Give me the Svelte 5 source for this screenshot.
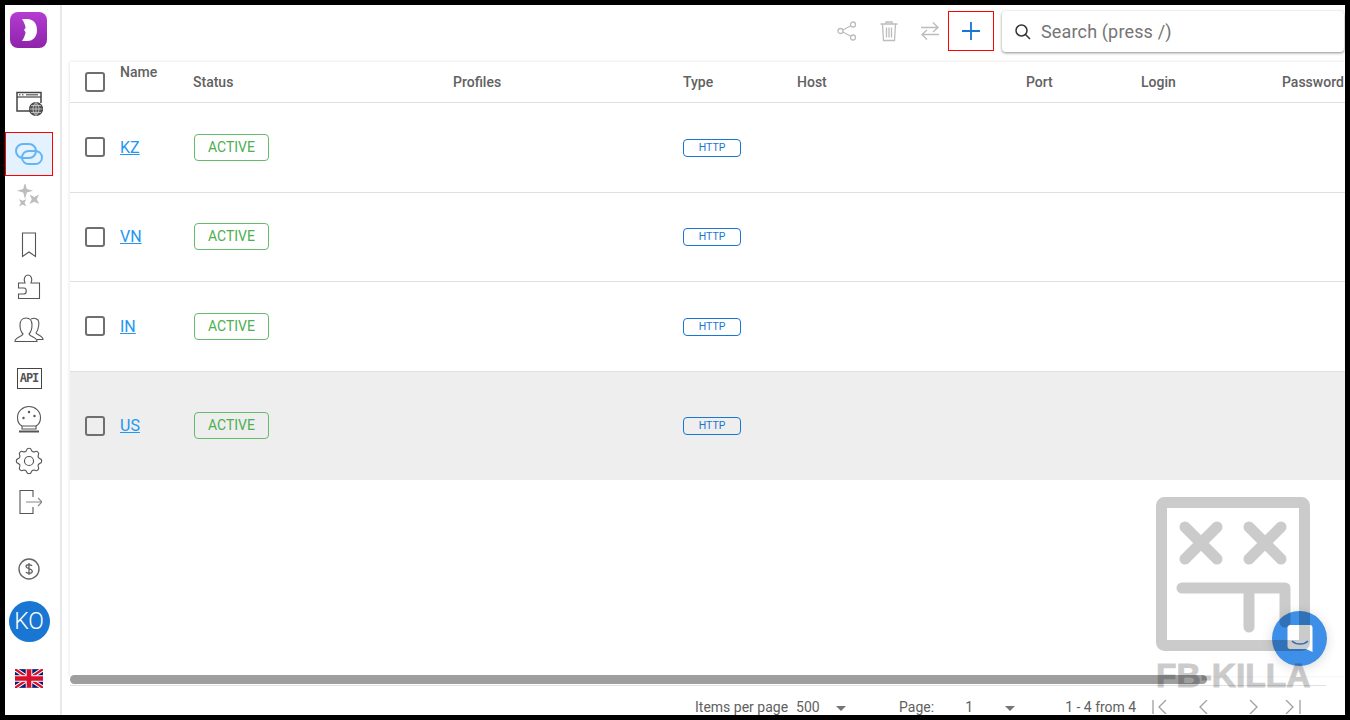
<script lang="ts">
	const columns = ['Status', 'Profiles', 'Type', 'Host', 'Port', 'Login', 'Password'];
	const proxies = [
		{ name: 'KZ', hovered: false },
		{ name: 'VN', hovered: false },
		{ name: 'IN', hovered: false },
		{ name: 'US', hovered: true }
	];
</script>

<div class="frame">
	<aside class="sidebar">
		<div class="logo">
			<svg viewBox="0 0 37 36" width="37" height="36">
				<path d="M12 7 H17 C24 7 27 12 27 18 C27 24 24 29 17 29 H12 C14.500 25 15.500 22 15.500 20 L14 18 L15.500 16 C15.500 14 14.500 11 12 7 Z" fill="#fff" />
			</svg>
		</div>

		<div class="nav-item m35">
			<svg viewBox="0 0 28 26" width="28" height="26" fill="none" stroke="#444" stroke-width="1.200">
				<path d="M15 20 H2 V1.500 H26 V12" stroke-width="1.500" />
				<path d="M2 6 H26" />
				<path d="M4 3.800 H5.500 M7 3.800 H8.500 M11 3.800 H23" stroke-width="1.600" stroke="#777" />
				<circle cx="21" cy="18" r="6.500" fill="#555" />
				<path d="M14.500 18 H27.500 M21 11.500 V24.500 M16 14.500 H26 M16 21.500 H26 M21 11.500 C17 15 17 21 21 24.500 M21 11.500 C25 15 25 21 21 24.500" stroke="#ddd" stroke-width="0.700" />
			</svg>
		</div>
		<div class="nav-item active m8">
			<svg viewBox="0 0 28 22" width="28" height="22" fill="none" stroke="#64b5f6" stroke-width="2">
				<rect x="1" y="1" width="20" height="14" rx="7" />
				<rect x="7" y="8" width="20" height="13" rx="6.500" />
			</svg>
		</div>
		<div class="nav-item m1">
			<svg viewBox="0 0 26 26" width="26" height="26" fill="#bdbdbd">
				<path d="M9 -1.500 L10.800 4.900 L17.200 6.700 L10.800 8.500 L9 14.900 L7.200 8.500 L0.800 6.700 L7.200 4.900 Z" />
				<path d="M13.500 10.500 L18.300 13 L23.100 10.500 L20.800 15.300 L23.100 20.100 L18.300 17.800 L13.500 20.100 L15.800 15.300 Z" />
				<path d="M3 15 L6.700 16.800 L10.400 15 L8.600 18.700 L10.400 22.400 L6.700 20.600 L3 22.400 L4.800 18.700 Z" />
			</svg>
		</div>
		<div class="nav-item m8">
			<svg viewBox="0 0 16 26" width="16" height="26" fill="none" stroke="#555" stroke-width="1.100">
				<path d="M1.500 1 H14.500 V24.500 L8 20 L1.500 24.500 Z" />
			</svg>
		</div>
		<div class="nav-item m1">
			<svg viewBox="0 0 24 27" width="24" height="27" fill="none" stroke="#555" stroke-width="1.100">
				<path d="M1.500 10 H8 C6 6 8 2 11 2 C14 2 16 6 14 10 H22.500 V25.500 H1.500 V21 H7 C10 21 10 15 7 15 H1.500 Z" />
			</svg>
		</div>
		<div class="nav-item m4">
			<svg viewBox="0 0 30 26" width="30" height="26" fill="none" stroke="#555" stroke-width="1.100">
				<path d="M1 24.500 C1 20 8 20 9 17 C6 14 6 11 6 8 C6 3 9 1 12 1 C15 1 18 3 18 8 C18 11 18 14 15 17 C16 20 23 20 23 24.500 Z" />
				<path d="M17 2 C19 1 22 1 24 3 C25.500 5 25 12 22 16 C23 18 29 19 29 22.500 H23" />
			</svg>
		</div>
		<div class="nav-item m8">
			<div class="api-badge">API</div>
		</div>
		<div class="nav-item m1">
			<svg viewBox="0 0 26 28" width="26" height="28" fill="none" stroke="#555" stroke-width="1.100">
				<path d="M6 21 C2 19 1.500 15 1.500 12.500 C1.500 6 7 1.500 13 1.500 C19 1.500 24.500 6 24.500 12.500 C24.500 15 24 19 20 21" />
				<path d="M6 21 H20 V24 H6 Z" />
				<path d="M3 26.500 H23" stroke-width="2" />
				<circle cx="13" cy="7" r="1.200" fill="#555" stroke="none" />
				<circle cx="7.500" cy="13" r="1.200" fill="#555" stroke="none" />
				<circle cx="18.500" cy="11" r="1.200" fill="#555" stroke="none" />
			</svg>
		</div>
		<div class="nav-item m2">
			<svg viewBox="0 0 24 24" width="34" height="34" fill="none" stroke="#555" stroke-width="0.800">
				<path d="M10.300 4.300 C10.700 2.600 13.300 2.600 13.700 4.300 C14 5.400 15.200 5.900 16.200 5.400 C17.700 4.500 19.500 6.300 18.600 7.800 C18.100 8.800 18.600 10 19.700 10.300 C21.400 10.700 21.400 13.300 19.700 13.700 C18.600 14 18.100 15.200 18.600 16.200 C19.500 17.700 17.700 19.500 16.200 18.600 C15.200 18.100 14 18.600 13.700 19.700 C13.300 21.400 10.700 21.400 10.300 19.700 C10 18.600 8.800 18.100 7.800 18.600 C6.300 19.500 4.500 17.700 5.400 16.200 C5.900 15.200 5.400 14 4.300 13.700 C2.600 13.300 2.600 10.700 4.300 10.300 C5.400 10 5.900 8.800 5.400 7.800 C4.500 6.300 6.300 4.500 7.800 5.400 C8.800 5.900 10 5.400 10.300 4.300 Z" />
				<circle cx="12" cy="12" r="3.200" />
			</svg>
		</div>
		<div class="nav-item m1">
			<svg viewBox="0 0 26 26" width="26" height="26" fill="none" stroke="#555" stroke-width="1.100">
				<path d="M17 8 V1.500 H4 V24.500 H17 V18" />
				<path d="M10 13 H26 M22 9 L26 13 L22 17" stroke="#888" />
			</svg>
		</div>
		<div class="nav-item m27">
			<svg viewBox="0 0 22 22" width="22" height="22" fill="none" stroke="#666" stroke-width="1.400">
				<circle cx="11" cy="11" r="10" />
				<path d="M14 8 C13.500 6.500 8 6 8 8.500 C8 11 14.300 10.500 14.300 13.500 C14.300 16 8.500 15.500 8 14 M11 5 V17" stroke-width="1.300" />
			</svg>
		</div>
		<div class="nav-item m12">
			<div class="avatar">KO</div>
		</div>
		<div class="nav-item m16">
			<svg viewBox="0 0 60 40" width="28" height="19">
				<rect width="60" height="40" fill="#0a1a6c" />
				<path d="M0 0 L60 40 M60 0 L0 40" stroke="#fff" stroke-width="9" />
				<path d="M0 0 L60 40 M60 0 L0 40" stroke="#d8102c" stroke-width="5" />
				<path d="M30 0 V40 M0 20 H60" stroke="#fff" stroke-width="14" />
				<path d="M30 0 V40 M0 20 H60" stroke="#d8102c" stroke-width="10" />
			</svg>
		</div>
	</aside>

	<main class="content">
		<header class="toolbar">
			<button type="button" class="tool share" aria-label="share">
				<svg viewBox="0 0 20 20" width="20" height="20" fill="none" stroke="#bdbdbd" stroke-width="1.300">
					<circle cx="3.500" cy="10" r="2.500" />
					<circle cx="16" cy="3.500" r="2.500" />
					<circle cx="16" cy="16.500" r="2.500" />
					<path d="M5.800 9 L13.800 4.700 M5.800 11 L13.800 15.300" />
				</svg>
			</button>
			<button type="button" class="tool" aria-label="delete">
				<svg viewBox="0 0 20 22" width="20" height="22" fill="none" stroke="#bdbdbd" stroke-width="1.300">
					<path d="M1.500 4 H18.500 M7 4 V2 H13 V4" />
					<path d="M3.500 4 L4.500 20.500 H15.500 L16.500 4" />
					<path d="M7.500 7.500 V17.500 M10 7.500 V17.500 M12.500 7.500 V17.500" />
				</svg>
			</button>
			<button type="button" class="tool" aria-label="swap">
				<svg viewBox="0 0 20 20" width="20" height="20" fill="none" stroke="#bdbdbd" stroke-width="1.400">
					<path d="M1 6.500 H18 M13 1.500 L18 6.500 L13 11" />
					<path d="M19 13.500 H2 M7 9 L2 13.500 L7 18.500" />
				</svg>
			</button>
			<button type="button" class="tool add" aria-label="add">
				<svg viewBox="0 0 20 20" width="20" height="20" stroke="#1976d2" stroke-width="1.800">
					<path d="M10 1 V19 M1 10 H19" />
				</svg>
			</button>
			<label class="search">
				<svg viewBox="0 0 18 18" width="18" height="18" fill="none" stroke="#333" stroke-width="1.500">
					<circle cx="7.500" cy="7.500" r="5.500" />
					<path d="M11.500 11.500 L16 16" />
				</svg>
				<input type="text" placeholder="Search (press /)" />
			</label>
		</header>

		<section class="table">
			<div class="row head">
				<div class="cell"><span class="check"></span></div>
				<div class="cell name-head">Name</div>
				{#each columns as column}
					<div class="cell">{column}</div>
				{/each}
			</div>
			{#each proxies as proxy}
				<div class="row body" class:hovered={proxy.hovered}>
					<div class="cell"><span class="check"></span></div>
					<div class="cell"><a href="#{proxy.name}" class="link">{proxy.name}</a></div>
					<div class="cell"><span class="status">ACTIVE</span></div>
					<div class="cell"></div>
					<div class="cell"><span class="type">HTTP</span></div>
					<div class="cell"></div>
					<div class="cell"></div>
					<div class="cell"></div>
					<div class="cell"></div>
				</div>
			{/each}
		</section>

		<div class="scrollbar"><div class="thumb"></div></div>

		<footer class="pager">
			<span>Items per page</span>
			<span class="select per-page">500<i class="caret"></i></span>
			<span>Page:</span>
			<span class="select page-no">1<i class="caret"></i></span>
			<span class="range">1 - 4 from 4</span>
			<svg viewBox="0 0 160 14" width="160" height="14" fill="none" stroke="#9e9e9e" stroke-width="1.300">
				<path d="M1 0 V14 M14 0 L7 7 L14 14" />
				<path d="M55 0 L48 7 L55 14" />
				<path d="M98 0 L105 7 L98 14" />
				<path d="M134 0 L141 7 L134 14 M148 0 V14" />
			</svg>
		</footer>
	</main>

	<div class="chat">
		<svg viewBox="0 0 26 30" width="26" height="30">
			<path d="M3 1 H23 C24.500 1 25.500 2 25.500 3.500 V28 L19 25 H3 C1.500 25 0.500 24 0.500 22.500 V3.500 C0.500 2 1.500 1 3 1 Z" fill="#fff" />
			<path d="M5 17 C9 21 17 21 21 17" fill="none" stroke="#3d8fe8" stroke-width="1.500" />
		</svg>
	</div>

	<div class="watermark">
		<svg viewBox="0 0 154 154" width="154" height="154" fill="none" stroke="#000" stroke-width="11" stroke-linecap="round" stroke-linejoin="round">
			<rect x="5.500" y="5.500" width="143" height="143" rx="3" />
			<path d="M29 30 L61 62 M61 30 L29 62 M93 30 L125 62 M125 30 L93 62" />
			<path d="M26 91 H129 V125 M93 91 V130" />
		</svg>
		<span>FB-KILLA</span>
	</div>
</div>

<style>
	:global(body) {
		background: #000;
	}

	.frame {
		position: relative;
		display: flex;
		box-sizing: border-box;
		width: 1340px;
		height: 710px;
		margin: 5px;
		background: #fff;
		overflow: hidden;
		font-family: Roboto, 'Liberation Sans', sans-serif;
	}

	.sidebar {
		flex: 0 0 55px;
		display: flex;
		flex-direction: column;
		box-sizing: content-box;
		border-right: 2px solid #e8e8e8;
	}

	.logo {
		width: 37px;
		height: 36px;
		margin: 7px 0 0 5px;
		border-radius: 8px;
		background: linear-gradient(#b43cd2, #8e24aa);
	}

	.nav-item {
		display: flex;
		align-items: center;
		justify-content: center;
		flex: 0 0 40px;
		width: 48px;
	}

	.m1 { margin-top: 1px; }
	.m2 { margin-top: 2px; }
	.m4 { margin-top: 4px; }
	.m8 { margin-top: 8px; }
	.m12 { margin-top: 12px; }
	.m16 { margin-top: 16px; }
	.m27 { margin-top: 27px; }
	.m35 { margin-top: 36px; }

	.nav-item.active {
		flex-basis: 44px;
		box-sizing: border-box;
		background: #e3f2fd;
		outline: 1px solid #f00;
		outline-offset: -1px;
	}

	.api-badge {
		box-sizing: border-box;
		width: 25px;
		height: 21px;
		border: 1px solid #444;
		font: bold 12px/19px 'DejaVu Sans Mono', monospace;
		color: #555;
		text-align: center;
		letter-spacing: -1px;
	}

	.avatar {
		flex: none;
		width: 41px;
		height: 41px;
		border-radius: 50%;
		background: #1976d2;
		color: #fff;
		font-size: 23px;
		font-weight: 300;
		line-height: 41px;
		text-align: center;
	}

	.content {
		flex: 1;
		min-width: 0;
		display: flex;
		flex-direction: column;
	}

	.toolbar {
		flex: 0 0 57px;
		display: flex;
		align-items: flex-start;
		justify-content: flex-end;
		box-sizing: border-box;
		padding: 6px 1px 0 0;
	}

	.tool {
		display: flex;
		align-items: center;
		justify-content: center;
		width: 41px;
		height: 40px;
		padding: 0;
		border: none;
		background: none;
	}

	.tool.share {
		width: 43px;
	}

	.tool.add {
		width: 46px;
		margin: 0 8px 0 -2px;
		outline: 1px solid #f00;
		outline-offset: -1px;
	}

	.search {
		display: flex;
		align-items: center;
		gap: 9px;
		box-sizing: border-box;
		width: 342px;
		height: 41px;
		padding: 0 12px;
		border-radius: 4px;
		background: #fff;
		box-shadow: 0 1px 3px rgba(0, 0, 0, 0.45);
	}

	.search input {
		flex: 1;
		border: none;
		outline: none;
		padding: 0;
		font: 18px Roboto, sans-serif;
		letter-spacing: 0.15px;
		background: none;
	}

	.search input::placeholder {
		color: #757575;
		opacity: 1;
	}

	.table {
		flex: 1;
		margin-left: 8px;
		min-height: 0;
		box-shadow: -1px 0 3px rgba(0, 0, 0, 0.08);
	}

	.row {
		display: grid;
		grid-template-columns: 50px 73px 260px 230px 114px 229px 115px 141px 63px;
		align-items: center;
		border-bottom: 1px solid #e0e0e0;
		font-size: 14px;
	}

	.cell {
		white-space: nowrap;
	}

	.head {
		height: 41px;
		box-sizing: border-box;
		font-weight: 500;
		color: #616161;
		box-shadow: 0 -1px 2px rgba(0, 0, 0, 0.04);
	}

	.name-head {
		align-self: start;
		padding-top: 2px;
	}

	.body {
		height: 89.500px;
		box-sizing: border-box;
	}

	.body.hovered {
		height: 108.500px;
		background: #eee;
		border-bottom: none;
	}

	.check {
		display: block;
		box-sizing: border-box;
		width: 20px;
		height: 20px;
		margin-left: 15px;
		border: 2.500px solid #6f6f6f;
		border-radius: 3px;
	}

	.link {
		font-size: 16px;
		color: #2196f3;
	}

	.status {
		display: inline-block;
		box-sizing: border-box;
		width: 75px;
		height: 27px;
		margin-left: 1px;
		border: 1px solid #66bb6a;
		border-radius: 4px;
		color: #4caf50;
		line-height: 25px;
		text-align: center;
	}

	.type {
		display: inline-block;
		box-sizing: border-box;
		width: 58px;
		height: 18px;
		border: 1.500px solid #1976d2;
		border-radius: 4px;
		color: #1976d2;
		font-size: 10.500px;
		line-height: 15px;
		text-align: center;
	}

	.scrollbar {
		flex: 0 0 10px;
		margin: 0 19px 0 8px;
		box-sizing: border-box;
		border-bottom: 1px solid #e0e0e0;
	}

	.thumb {
		width: 1137px;
		height: 9px;
		margin-top: -1px;
		border-radius: 5px;
		background: #9e9e9e;
	}

	.pager {
		flex: 0 0 25px;
		display: flex;
		align-items: flex-start;
		box-sizing: border-box;
		padding: 13px 0 0 633px;
		font-size: 14px;
		line-height: 16px;
		color: #616161;
		white-space: nowrap;
	}

	.select {
		display: flex;
		position: relative;
	}

	.per-page {
		width: 103px;
		margin-left: 8px;
	}

	.page-no {
		width: 100px;
		margin-left: 31px;
	}

	.caret {
		position: absolute;
		top: 7px;
		border: 5px solid transparent;
		border-top-color: #757575;
		border-bottom: none;
	}

	.per-page .caret {
		left: 40px;
	}

	.page-no .caret {
		left: 40px;
	}

	.range {
		margin-right: 16px;
	}

	.pager svg {
		margin-top: 1px;
	}

	.chat {
		position: absolute;
		left: 1267px;
		top: 606px;
		display: flex;
		align-items: center;
		justify-content: center;
		width: 55px;
		height: 55px;
		border-radius: 50%;
		background: #3d8fe8;
		box-shadow: 0 2px 12px rgba(0, 0, 0, 0.15);
	}

	.watermark {
		position: absolute;
		left: 1151px;
		top: 492px;
		width: 154px;
		opacity: 0.2;
		pointer-events: none;
	}

	.watermark svg {
		display: block;
	}

	.watermark span {
		position: absolute;
		left: 0;
		top: 160px;
		width: 154px;
		font: bold 33.500px/38px 'Liberation Sans', sans-serif;
		-webkit-text-stroke: 1px #000;
		color: #000;
		white-space: nowrap;
	}
</style>
